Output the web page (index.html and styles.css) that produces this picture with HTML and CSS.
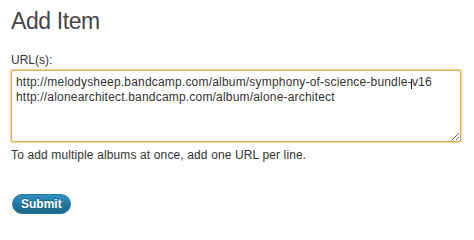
FILE: index.html
```html
<!DOCTYPE html>
<html>
<head>
<meta charset="utf-8">
<link rel="stylesheet" href="styles.css">
</head>
<body>
<div class="wrap">
  <h2 class="title">Add Item</h2>
  <label class="label" for="urls">URL(s):</label>
  <div class="field">
    <textarea id="urls" class="urls" spellcheck="false">http://melodysheep.bandcamp.com/album/symphony-of-science-bundle-v16
http://alonearchitect.bandcamp.com/album/alone-architect</textarea>
    <span class="caret"></span>
  </div>
  <p class="help">To add multiple albums at once, add one URL per line.</p>
  <button class="submit" type="button">Submit</button>
</div>
</body>
</html>
```

FILE: styles.css
```css
html, body {
  margin: 0;
  padding: 0;
  background: #fff;
}

.wrap {
  padding: 6px 0 0 11px;
  font-family: "Liberation Sans", Arial, sans-serif;
  font-size: 12px;
  color: #333;
}

.title {
  margin: 0;
  font-size: 23px;
  line-height: 30px;
  font-weight: normal;
  color: #464646;
  letter-spacing: -0.4px;
}

.label {
  display: block;
  margin-top: 17px;
  line-height: 15px;
  color: #333;
}

.field {
  position: relative;
  margin-top: 2px;
  width: 450px;
}

.urls {
  display: block;
  box-sizing: border-box;
  width: 450px;
  height: 72px;
  margin: 0;
  padding: 4px 4px 0 4px;
  border: 1px solid #e1ad54;
  box-shadow: 0 0 1px 1px #f1d39c;
  border-radius: 2px;
  font-family: "Liberation Sans", Arial, sans-serif;
  font-size: 12px;
  line-height: 15px;
  letter-spacing: 0.19px;
  color: #333;
  background: #fff;
  outline: none;
  overflow: auto;
  white-space: pre;
  resize: both;
}

.caret {
  position: absolute;
  left: 400px;
  top: 9px;
  width: 1px;
  height: 10px;
  background: #222;
}

.help {
  margin: 6px 0 0 0;
  line-height: 15px;
  letter-spacing: 0.13px;
  color: #333;
}

.submit {
  display: block;
  margin: 31px 0 0 1px;
  padding: 1px 8px;
  border: 1px solid #23779f;
  border-radius: 11px;
  background: linear-gradient(#3190c2, #21759b 55%, #1c6889);
  color: #fff;
  font-family: "Liberation Sans", Arial, sans-serif;
  font-size: 12px;
  font-weight: bold;
  line-height: 16px;
  text-shadow: 0 -1px 0 rgba(0, 0, 0, 0.3);
  cursor: pointer;
}
```
